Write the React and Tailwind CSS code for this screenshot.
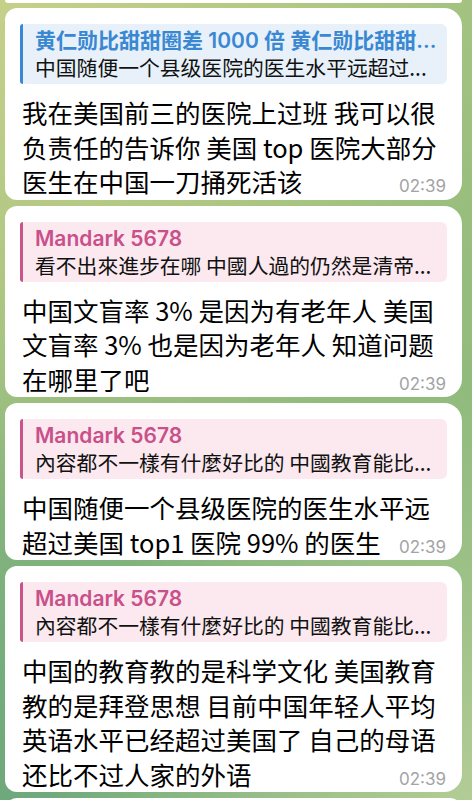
import React from "react";

const CJK = "font-['Noto_Sans_CJK_SC','Noto_Sans',sans-serif]";

const messages = [
  {
    color: "blue",
    name: "黄仁勋比甜甜圈差 1000 倍 黄仁勋比甜甜...",
    quote: "中国随便一个县级医院的医生水平远超过...",
    lines: ["我在美国前三的医院上过班 我可以很", "负责任的告诉你 美国 top 医院大部分", "医生在中国一刀捅死活该"],
  },
  {
    color: "pink",
    name: "Mandark 5678",
    quote: "看不出來進步在哪 中國人過的仍然是清帝...",
    lines: ["中国文盲率 3% 是因为有老年人 美国", "文盲率 3% 也是因为老年人 知道问题", "在哪里了吧"],
  },
  {
    color: "pink",
    name: "Mandark 5678",
    quote: "內容都不一樣有什麼好比的 中國教育能比...",
    lines: ["中国随便一个县级医院的医生水平远", "超过美国 top1 医院 99% 的医生"],
  },
  {
    color: "pink",
    name: "Mandark 5678",
    quote: "內容都不一樣有什麼好比的 中國教育能比...",
    lines: ["中国的教育教的是科学文化 美国教育", "教的是拜登思想 目前中国年轻人平均", "英语水平已经超过美国了 自己的母语", "还比不过人家的外语"],
  },
];

function Reply({ color, name, quote }) {
  const blue = color === "blue";
  return (
    <div className={`flex h-[60px] rounded-[6px] ${blue ? "bg-[#e8f1fa]" : "bg-[#fbe9ef]"}`}>
      <div className={`w-[3px] shrink-0 rounded-l-[6px] ${blue ? "bg-[#3a88d2]" : "bg-[#c9538b]"}`} />
      <div className="min-w-0 flex-1 pl-[12px] pr-2 pt-[4px]">
        <div
          className={`whitespace-nowrap text-[21px] leading-[26px] font-semibold font-['Inter','Noto_Sans_CJK_SC',sans-serif] ${blue ? "text-[#3a88d2]" : "text-[#c9508a]"}`}
        >
          {name}
        </div>
        <div className={`whitespace-nowrap text-[20.8px] leading-[27px] text-[#111] ${CJK}`}>{quote}</div>
      </div>
    </div>
  );
}

function Bubble({ msg }) {
  const last = msg.lines.length - 1;
  return (
    <div className="ml-[5px] mr-[10px] rounded-l-[12px] rounded-r-[18px] bg-white px-[15px] pt-[16px] pb-[1px]">
      <Reply color={msg.color} name={msg.name} quote={msg.quote} />
      <div className={`mt-[11px] pl-[2px] text-[25.5px] leading-[34.5px] text-black ${CJK}`}>
        {msg.lines.map((line, i) =>
          i === last ? (
            <div key={i} className="flex h-[34.5px] items-baseline justify-between whitespace-nowrap">
              <span>{line}</span>
              <span className="pr-[1px] text-[17px] leading-none text-[#a3a3a6] font-['Inter',sans-serif]">02:39</span>
            </div>
          ) : (
            <div key={i} className="whitespace-nowrap">
              {line}
            </div>
          )
        )}
      </div>
    </div>
  );
}

export default function App() {
  return (
    <div className="h-[800px] w-[472px] overflow-hidden bg-[radial-gradient(circle_at_0%_0%,#c5d089_0%,transparent_55%),radial-gradient(circle_at_100%_100%,#b3cc95_0%,transparent_45%),radial-gradient(circle_at_0%_100%,#6ea87c_0%,transparent_50%),linear-gradient(160deg,#a7c47f,#80b47b)]">
      <div className="ml-[5px] mr-[10px] h-[3px] rounded-b-[12px] bg-white" />
      <div className="mt-[5px] flex flex-col gap-[6px]">
        {messages.map((m, i) => (
          <Bubble key={i} msg={m} />
        ))}
        <div className="ml-[5px] mr-[10px] h-[20px] rounded-t-[12px] bg-white" />
      </div>
    </div>
  );
}
